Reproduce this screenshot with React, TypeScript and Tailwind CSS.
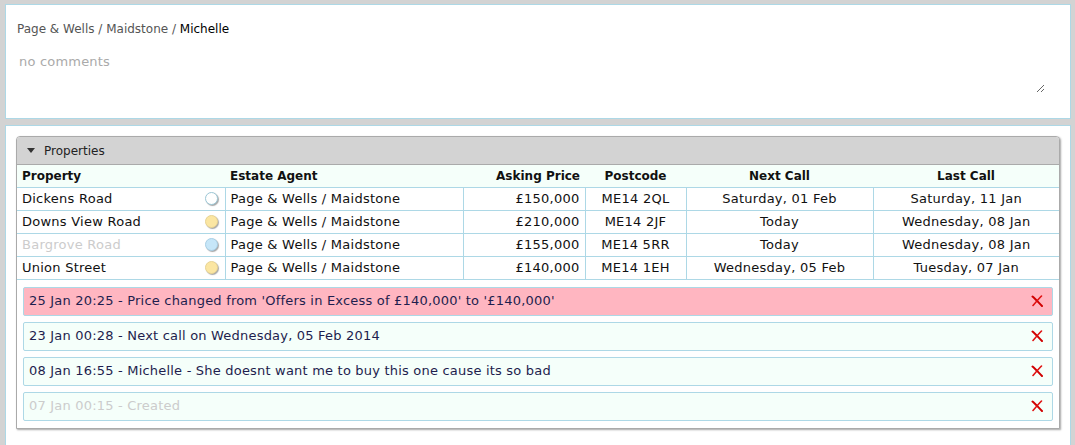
import React from "react";

const font = { fontFamily: '"DejaVu Sans", Verdana, sans-serif' };

function Circle({ kind }: { kind: "white" | "yellow" | "blue" }) {
  const cls =
    kind === "white"
      ? "bg-white border-[#9cc7d6]"
      : kind === "yellow"
      ? "bg-[#fbe6a2] border-[#e8d494]"
      : "bg-[#c6e6f8] border-[#a9d0e6]";
  return (
    <span
      className={`inline-block w-[13px] h-[13px] rounded-full border ${cls} shadow-[1px_1px_1px_rgba(0,0,0,0.35)]`}
    />
  );
}

function RedX() {
  return (
    <svg width="12" height="12" viewBox="0 0 12 12" className="block">
      <path d="M1.5 1.5 C4 3.5, 7 7, 11 11" stroke="#d00000" strokeWidth="2" fill="none" strokeLinecap="round" />
      <path d="M10.5 1 C8 3.5, 5 7, 2 10.5" stroke="#e01010" strokeWidth="1.6" fill="none" strokeLinecap="round" />
    </svg>
  );
}

const rows = [
  { name: "Dickens Road", c: "white" as const, price: "£150,000", pc: "ME14 2QL", next: "Saturday, 01 Feb", last: "Saturday, 11 Jan", dim: false },
  { name: "Downs View Road", c: "yellow" as const, price: "£210,000", pc: "ME14 2JF", next: "Today", last: "Wednesday, 08 Jan", dim: false },
  { name: "Bargrove Road", c: "blue" as const, price: "£155,000", pc: "ME14 5RR", next: "Today", last: "Wednesday, 08 Jan", dim: true },
  { name: "Union Street", c: "yellow" as const, price: "£140,000", pc: "ME14 1EH", next: "Wednesday, 05 Feb", last: "Tuesday, 07 Jan", dim: false },
];

const notes = [
  { text: "25 Jan 20:25 - Price changed from 'Offers in Excess of £140,000' to '£140,000'", bg: "bg-[#ffb6c1]", color: "text-[#1e1e4e]" },
  { text: "23 Jan 00:28 - Next call on Wednesday, 05 Feb 2014", bg: "bg-[#f5fffa]", color: "text-[#1e1e4e]" },
  { text: "08 Jan 16:55 - Michelle - She doesnt want me to buy this one cause its so bad", bg: "bg-[#f5fffa]", color: "text-[#1e1e4e]" },
  { text: "07 Jan 00:15 - Created", bg: "bg-[#f5fffa]", color: "text-[#cccccc]" },
];

export default function App() {
  return (
    <div className="h-[445px] overflow-hidden bg-[#d3d3d3] pt-[4px] pl-[5px] pr-[4px]" style={font}>
      {/* Top panel */}
      <div className="w-[1066px] h-[115px] bg-white border border-[#add8e6] px-[11px] pt-[16px]">
        <div className="text-[12px] leading-[16px] text-[#555]">
          Page &amp; Wells / Maidstone / <span className="text-black">Michelle</span>
        </div>
        <textarea
          placeholder="no comments"
          className="mt-[15px] block w-[1028px] h-[41px] p-[2px] text-[13px] leading-[16px] tracking-[0.2px] outline-none border-0 placeholder:text-[#aaaaaa] resize"
          style={font}
        />
      </div>

      {/* Second panel */}
      <div className="mt-[6px] w-[1066px] h-[400px] bg-white border border-[#add8e6] px-[10px] pt-[10px]">
        <div className="w-[1044px] border border-[#aaaaaa] rounded-t-[4px] bg-white shadow-[1px_1px_2px_rgba(0,0,0,0.35)] pb-[7px]">
          <div className="h-[28px] bg-[#d3d3d3] border-b border-[#aaaaaa] rounded-t-[3px] flex items-center pl-[10px] text-[12px] text-[#222]">
            <svg width="8" height="5" viewBox="0 0 8 5" className="mr-[9px]">
              <path d="M0 0 L8 0 L4 5 Z" fill="#333" />
            </svg>
            Properties
          </div>
          <table className="w-full border-collapse text-[13px] tracking-[0.25px] text-[#111]">
            <thead>
              <tr className="bg-[#f5fffa] h-[22px] border-b border-[#add8e6] text-[12px] tracking-normal">
                <th className="text-left font-bold pl-[5px] w-[208px]">Property</th>
                <th className="text-left font-bold pl-[5px] w-[238px]">Estate Agent</th>
                <th className="text-right font-bold pr-[5px] w-[122px]">Asking Price</th>
                <th className="text-center font-bold w-[101px]">Postcode</th>
                <th className="text-center font-bold w-[187px]">Next Call</th>
                <th className="text-center font-bold">Last Call</th>
              </tr>
            </thead>
            <tbody>
              {rows.map((r) => (
                <tr key={r.name} className="h-[23px] border-b border-[#add8e6]">
                  <td className="pl-[5px] pr-[7px] border-r border-[#add8e6]">
                    <div className="flex items-center justify-between">
                      <span className={r.dim ? "text-[#cccccc]" : ""}>{r.name}</span>
                      <Circle kind={r.c} />
                    </div>
                  </td>
                  <td className="pl-[5px] border-r border-[#add8e6]">Page &amp; Wells / Maidstone</td>
                  <td className="text-right pr-[5px] border-r border-[#add8e6]">{r.price}</td>
                  <td className="text-center border-r border-[#add8e6]">{r.pc}</td>
                  <td className="text-center border-r border-[#add8e6]">{r.next}</td>
                  <td className="text-center">{r.last}</td>
                </tr>
              ))}
            </tbody>
          </table>
          <div className="flex flex-col gap-[6px] px-[6px] mt-[7px]">
            {notes.map((n) => (
              <div
                key={n.text}
                className={`h-[29px] border border-[#add8e6] rounded-[2px] ${n.bg} flex items-center justify-between pl-[5px] pr-[9px] text-[13px] tracking-[0.2px]`}
              >
                <span className={n.color}>{n.text}</span>
                <RedX />
              </div>
            ))}
          </div>
        </div>
      </div>
    </div>
  );
}
